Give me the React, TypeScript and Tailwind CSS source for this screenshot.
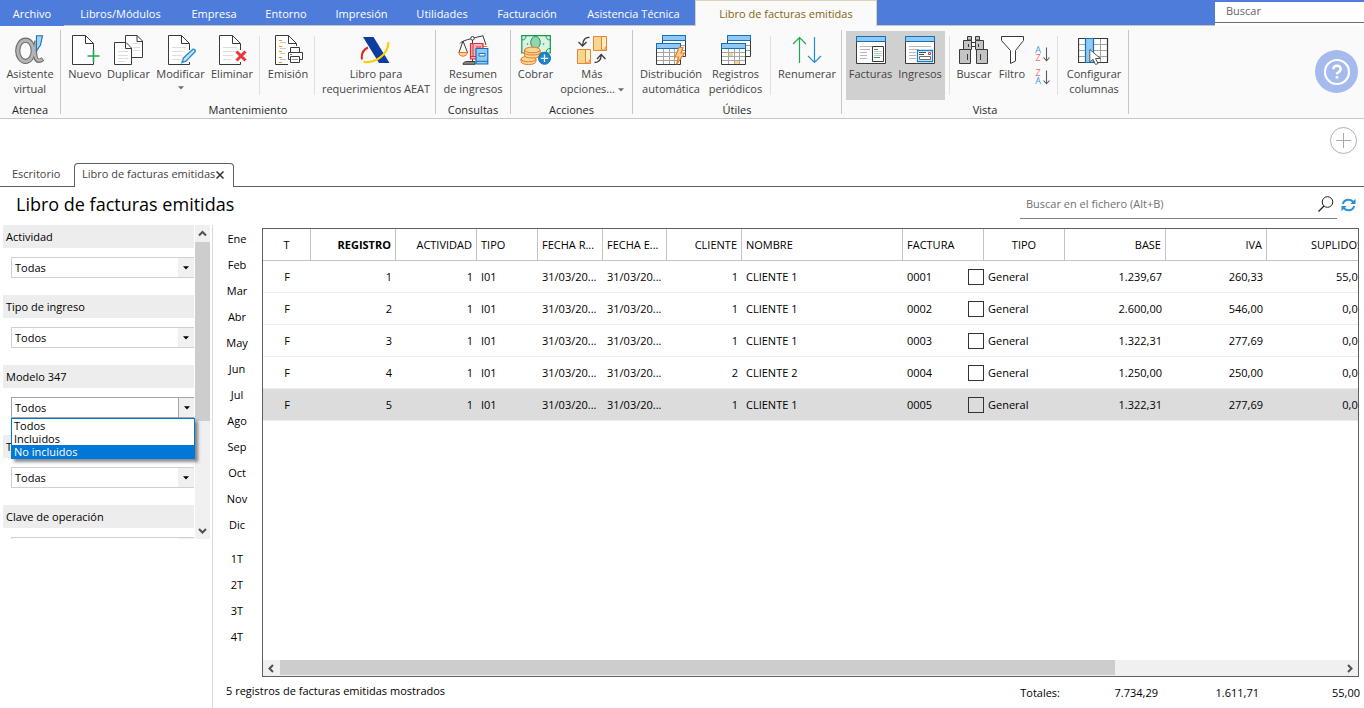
import { useState } from 'react';
import type { ReactNode } from 'react';
import { clsx } from 'clsx';

const menu = [
  { label: 'Archivo', w: 'w-[64px]' },
  { label: 'Libros/Módulos', w: 'w-[113px]' },
  { label: 'Empresa', w: 'w-[74px]' },
  { label: 'Entorno', w: 'w-[70px]' },
  { label: 'Impresión', w: 'w-[81px]' },
  { label: 'Utilidades', w: 'w-[80px]' },
  { label: 'Facturación', w: 'w-[90px]' },
  { label: 'Asistencia Técnica', w: 'w-[123px]' },
];

const filters = [
  { id: 'actividad', label: 'Actividad', value: 'Todas' },
  { id: 'tipo-ingreso', label: 'Tipo de ingreso', value: 'Todos' },
  { id: 'modelo-347', label: 'Modelo 347', value: 'Todos', options: ['Todos', 'Incluidos', 'No incluidos'] },
  { id: 'tipo-operacion', label: 'T', value: 'Todas' },
  { id: 'clave', label: 'Clave de operación', value: 'Todas' },
];

const months = ['Ene', 'Feb', 'Mar', 'Abr', 'May', 'Jun', 'Jul', 'Ago', 'Sep', 'Oct', 'Nov', 'Dic'];
const quarters = ['1T', '2T', '3T', '4T'];

const columns = [
  { label: 'T', w: 'w-[48px]', align: 'text-center' },
  { label: 'REGISTRO', w: 'w-[85px]', align: 'text-right font-bold' },
  { label: 'ACTIVIDAD', w: 'w-[81px]', align: 'text-right' },
  { label: 'TIPO', w: 'w-[61px]', align: 'text-left' },
  { label: 'FECHA R...', w: 'w-[65px]', align: 'text-left' },
  { label: 'FECHA E...', w: 'w-[64px]', align: 'text-left' },
  { label: 'CLIENTE', w: 'w-[75px]', align: 'text-right' },
  { label: 'NOMBRE', w: 'w-[161px]', align: 'text-left' },
  { label: 'FACTURA', w: 'w-[81px]', align: 'text-left' },
  { label: 'TIPO', w: 'w-[81px]', align: 'text-center' },
  { label: 'BASE', w: 'w-[101px]', align: 'text-right' },
  { label: 'IVA', w: 'w-[101px]', align: 'text-right' },
  { label: 'SUPLIDOS', w: 'w-[101px]', align: 'text-right' },
];

const invoices = [
  { reg: 1, client: 1, name: 'CLIENTE 1', number: '0001', base: '1.239,67', iva: '260,33', supl: '55,00' },
  { reg: 2, client: 1, name: 'CLIENTE 1', number: '0002', base: '2.600,00', iva: '546,00', supl: '0,00' },
  { reg: 3, client: 1, name: 'CLIENTE 1', number: '0003', base: '1.322,31', iva: '277,69', supl: '0,00' },
  { reg: 4, client: 2, name: 'CLIENTE 2', number: '0004', base: '1.250,00', iva: '250,00', supl: '0,00' },
  { reg: 5, client: 1, name: 'CLIENTE 1', number: '0005', base: '1.322,31', iva: '277,69', supl: '0,00' },
];

function Icon({ children }: { children: ReactNode }) {
  return (
    <svg width="32" height="32" viewBox="0 0 32 32" fill="none" stroke="#3a3a3a" className="shrink-0" aria-hidden="true">
      {children}
    </svg>
  );
}

// Sheet with a folded corner; the lower right side stays open for the action mark
function Sheet({ lines = false }: { lines?: boolean }) {
  return (
    <>
      <path d="M24.5 15V8.5L16.5 .5H3.5V29.5H24.5V27" fill="#fff" stroke="none" />
      <path d="M24.5 15V8.5L16.5 .5H3.5V29.5H24.5V27M16.5 .5V8.5H24.5" />
      {lines && <path d="M7 12.5H21M7 16.5H20M7 20.5H17M7 24.5H15" stroke="#dedede" />}
    </>
  );
}

const icons = {
  assistant: (
    <Icon>
      <ellipse cx="11.5" cy="15.8" rx="7.8" ry="10.6" stroke="#6c6c6c" strokeWidth="5.2" />
      <path d="M22.5 6Q20 16 21.5 22Q23 28.5 29 24" stroke="#6c6c6c" strokeWidth="4.4" />
      <ellipse cx="11.5" cy="15.8" rx="7.8" ry="10.6" stroke="#b4b4b4" strokeWidth="3" />
      <path d="M22.5 6Q20 16 21.5 22Q23 27.5 28.3 24.4" stroke="#b4b4b4" strokeWidth="2.4" />
      <path d="M22.5 .8H28.5L26.5 10L22.3 16Z" fill="#9fd3f7" stroke="#1f6fb5" strokeWidth="1.1" />
    </Icon>
  ),
  add: <Icon><Sheet /><path d="M24.5 15V27M18.5 21H30.5" stroke="#1faa50" strokeWidth="1.6" /></Icon>,
  duplicate: (
    <Icon>
      <path d="M12.5 22.5V.5H24L29.5 6V22.5Z" fill="#fff" />
      <path d="M24 .5V6.5H29.5" />
      <path d="M19 8.5H27M20 12.5H27M20 15.5H27" stroke="#dedede" />
      <path d="M1.5 7.5H13L18.5 13V29.5H1.5Z" fill="#fff" />
      <path d="M12.5 7.5V13.5H18.5" />
      <path d="M5 16.5H15M5 20.5H15M5 23.5H15M5 26.5H12" stroke="#dedede" />
    </Icon>
  ),
  edit: (
    <Icon>
      <Sheet lines />
      <path d="M17 27.5L18.5 23L28 14.2Q30.5 14 30.3 16.5L21.2 26Z" fill="#c7e4fa" stroke="#2a8dd4" strokeWidth="1.4" />
    </Icon>
  ),
  remove: <Icon><Sheet lines /><path d="M20.5 16.5L29.5 25.5M29.5 16.5L20.5 25.5" stroke="#e8383b" strokeWidth="3" /></Icon>,
  print: (
    <Icon>
      <path d="M16 29.5H3.5V.5H16.5L24.5 8.5V11" fill="#fff" />
      <path d="M16.5 .5V8.5H24.5" />
      <path d="M7 5.5H10M7 11.5H10M7 16.5H10M7 22.5H10M7 27.5H10" stroke="#f29a1f" />
      <path d="M8 7.5H14M8 13.5H14M8 18.5H13M8 24.5H14" stroke="#c8c8c8" />
      <path d="M18.5 17V12.5H27.5V17" fill="#fff" />
      <path d="M18 24.5H16.5V17.5H30.5V24.5H28" fill="#fff" />
      <path d="M18.5 21.5H27.5V27.5H18.5Z" fill="#fff" />
      <path d="M20 24.5H26" stroke="#9a9a9a" />
      <path d="M18 19.5H20" stroke="#2a8dd4" />
    </Icon>
  ),
  aeat: (
    <Icon>
      <path d="M3 2H13.5L29.5 28H19Z" fill="#0d3d9c" stroke="none" />
      <path d="M2 24.5Q.5 16 8 12.5" stroke="#e1271c" strokeWidth="2" />
      <path d="M3.5 26.8C15.5 28.5 28 20 28.5 7" stroke="#fbce07" strokeWidth="2.2" />
    </Icon>
  ),
  balance: (
    <Icon>
      <path d="M3 8.5Q4 6 15 3.5Q20 2 26 .8L29 10M6 6L2 17.5M6 6L10.5 17.5M15.5 5V26" strokeWidth="1" />
      <circle cx="15.5" cy="3.3" r="1.8" fill="#fff" />
      <path d="M1.5 17.5H10.7Q9.5 21.3 6 21.3T1.5 17.5Z" fill="#fbd795" stroke="#e9792b" />
      <path d="M26 11.5H30.5" stroke="#e9792b" />
      <path d="M6 29.3Q6 26.5 11 26.5H18V29.3Z" fill="#8a8a8a" />
      <path d="M13.5 8.5H26V24H13.5Z" fill="#f3b3bc" stroke="#dd2f35" strokeWidth="1.2" />
      <path d="M13.5 21.5H19M16 8.5V21.5M19 12H24" stroke="#dd2f35" />
      <path d="M19 13.5H30.8V29H19Z" fill="#91c9f5" stroke="#1470b8" strokeWidth="1.2" />
      <path d="M22 18.5H28V21H22Z" fill="#fff" stroke="#1470b8" />
      <path d="M19 26.3H30.8" stroke="#1470b8" />
    </Icon>
  ),
  cash: (
    <Icon>
      <path d="M1.8 .7H30.3V18H1.8Z" fill="#d9f2e3" stroke="#189a4d" strokeWidth="1.2" />
      <path d="M1.8 5Q6 5 6 .7M26 .7Q26 5 30.3 5M26 18Q26 13.5 30.3 13.5" stroke="#189a4d" />
      <ellipse cx="15.5" cy="7.5" rx="4.8" ry="6" fill="#93d6ad" stroke="#189a4d" />
      <circle cx="7.5" cy="9" r=".8" fill="#189a4d" stroke="none" />
      <circle cx="23.5" cy="9" r=".8" fill="#189a4d" stroke="none" />
      <g fill="#fbd795" stroke="#e9792b">
        <path d="M1 24V26Q1 29.5 8.5 29.5T16 26V24Z" />
        <ellipse cx="8.5" cy="24" rx="7.5" ry="2.8" />
        <path d="M4.5 15V20Q4.5 23 12.3 23T20 20V15Z" />
        <path d="M4.5 17.5Q5 20 12.3 20T20 17.5" />
        <ellipse cx="12.3" cy="15" rx="7.7" ry="2.8" />
      </g>
      <circle cx="24.5" cy="23.3" r="6" fill="#1d84cf" stroke="#1470b8" />
      <path d="M24.5 19.5V27M20.7 23.3H28.3" stroke="#fff" strokeWidth="1.3" />
    </Icon>
  ),
  more: (
    <Icon>
      <g fill="#f6d78f" stroke="#e9852f" strokeWidth="1">
        <path d="M17.5 1.5H30.5V15.5H17.5Z" />
        <path d="M25.5 1.5H30.5V11.5L29 12.5V15.5L25.5 14.5Z" fill="#fdebc5" />
        <path d="M1.5 14.5H14.5V28.5H1.5Z" />
        <path d="M9.5 14.5H14.5V24.5L13 25.5V28.5L9.5 27.5Z" fill="#fdebc5" />
      </g>
      <path d="M13.5 2.5Q7 2 6.5 10.5M2.5 7L6.5 11L10.5 7" strokeWidth="1.3" />
      <path d="M18.5 27.5Q25 27.5 25.2 20M21 24L25.2 19.5L29.5 24" strokeWidth="1.3" />
    </Icon>
  ),
  calendarBolt: (
    <Icon>
      <Calendars />
      <path d="M24 12.5H28L26 18H29.5L21.5 29.5L23.5 22H20Z" fill="#fbd28a" stroke="#e9792b" strokeWidth="1.2" />
    </Icon>
  ),
  calendarPeriod: (
    <Icon>
      <Calendars />
      <path d="M9 18H13V21H9ZM15 26H19V29H15Z" fill="#f7d78f" stroke="none" />
    </Icon>
  ),
  renumber: (
    <Icon>
      <path d="M8.5 28V2.5M2 9L8.5 2.5L15 9" stroke="#1faa50" strokeWidth="1.2" />
      <path d="M23.5 2V27.5M17 21L23.5 27.5L30 21" stroke="#2a8dd4" strokeWidth="1.2" />
    </Icon>
  ),
  invoices: (
    <Icon>
      <Window />
      <path d="M17.5 11.5H28.5V26.5H17.5Z" fill="#fff" />
      <path d="M19 14.5H23M19 22.5H25" stroke="#1faa50" />
      <path d="M19 16.5H27M19 18.5H27M19 20.5H27" stroke="#c8c8c8" />
    </Icon>
  ),
  income: (
    <Icon>
      <Window />
      <path d="M13.5 15.5H28.5V26.5H13.5Z" fill="#fff" stroke="#1e80c9" strokeWidth="1.3" />
      <path d="M15 17.5H22M15 19.5H20" strokeWidth=".9" />
      <path d="M24.5 17.5H26.5V19.5H24.5Z" stroke="#e5383b" />
      <path d="M15.5 21.5H26.5V24.5H15.5Z" stroke="#6d6d6d" />
    </Icon>
  ),
  binoculars: (
    <Icon>
      <g fill="#c4c4c4">
        <path d="M9.5 1.5H13.5V5H9.5ZM17.5 1.5H21.5V5H17.5Z" />
        <path d="M13.5 7.5H17.5V11.5H13.5Z" fill="#fff" />
        <path d="M5.5 5.5H13.5V14.5H5.5ZM17.5 5.5H25.5V14.5H17.5Z" />
        <path d="M1.5 14.5H12.5V28.5H1.5ZM18.5 14.5H29.5V28.5H18.5Z" />
      </g>
      <path d="M9.5 19V25M22.5 19V25M10.5 9V12M20.5 9V12" />
    </Icon>
  ),
  funnel: (
    <Icon>
      <path d="M5.5 1.5H27.5V5.5L19.5 15.5V26L14.5 28.5V15.5L5.5 5.5Z" fill="#fff" />
    </Icon>
  ),
  columns: (
    <Icon>
      <path d="M.5 3.5H29.5V27.5H.5Z" fill="#fff" strokeWidth="1.2" />
      <path d="M1 9.5H29M1 15.5H29M1 21.5H29M22.5 4V27" stroke="#a5a5a5" />
      <path d="M7.5 3.5H15.5V27.5H7.5Z" fill="#91c9f5" stroke="#1470b8" strokeWidth="1.2" />
      <path d="M11.8 14.5V27L15 24.3L17.5 29.5L20 28.5L17.5 23.5L22.5 23.5Z" fill="#fff" stroke="#5a5a5a" />
    </Icon>
  ),
};

function Calendars() {
  return (
    <>
      <path d="M7.5 .5H30.5V21.5H7.5Z" fill="#fff" />
      <path d="M26 10.5H30M26 15.5H30" stroke="#9b9b9b" />
      <path d="M7.5 .5H30.5V5.5H7.5Z" fill="#91c9f5" stroke="#1470b8" />
      <path d="M1.5 8.5H25.5V29.5H1.5Z" fill="#fff" />
      <path d="M2 17.5H25M2 21.5H25M2 25.5H25M8.5 14V29M14.5 14V29M19.5 14V29" stroke="#a5a5a5" />
      <path d="M1.5 8.5H25.5V13.5H1.5Z" fill="#91c9f5" stroke="#1470b8" />
    </>
  );
}

function Window() {
  return (
    <>
      <path d="M1.5 1.5H30.5V28.5H1.5Z" fill="#fff" />
      <path d="M1.5 1.5H30.5V6.5H1.5Z" fill="#91c9f5" stroke="#1470b8" />
      <path d="M5 11.5H27M5 14.5H15M5 17.5H12M5 20.5H12M5 23.5H12" stroke="#b8b8b8" />
    </>
  );
}

function Caret({ className = 'text-[#6a6a6a]' }: { className?: string }) {
  return (
    <svg width="6" height="4" viewBox="0 0 6 4" className={clsx('inline-block', className)} aria-hidden="true">
      <path d="M0 .3H6L3 3.6Z" fill="currentColor" />
    </svg>
  );
}

function Chevron({ d }: { d: string }) {
  return (
    <svg width="9" height="9" viewBox="0 0 9 9" fill="none" stroke="#505050" strokeWidth="2" aria-hidden="true">
      <path d={d} />
    </svg>
  );
}

function Tool({ icon, w, active, children }: { icon: ReactNode; w: string; active?: boolean; children: ReactNode }) {
  return (
    <button
      type="button"
      className={clsx('flex h-[69px] shrink-0 flex-col items-center whitespace-nowrap pt-1 text-center leading-[15px]', w, active ? 'bg-[#d0d0d0]' : 'hover:bg-[#ececec]')}
    >
      {icon}
      <span className="-mt-px">{children}</span>
    </button>
  );
}

function Group({ label, children, flush }: { label: string; children: ReactNode; flush?: boolean }) {
  return (
    <>
      <section className={clsx('shrink-0 pt-[5px]', !flush && 'px-1')}>
        <div className="flex">{children}</div>
        <h2 className="text-center leading-5 text-[#262626]">{label}</h2>
      </section>
      <div className="my-1 w-px shrink-0 bg-[#c6c6c6]" />
    </>
  );
}

function Divider() {
  return <div className="ml-1 mr-1.5 mt-[5px] h-[59px] w-px shrink-0 bg-[#e0e0e0]" />;
}

function SortButton({ first, second, label }: { first: 'A' | 'Z'; second: 'A' | 'Z'; label: string }) {
  const tone = (c: string) => (c === 'A' ? 'text-[#3a9be0]' : 'text-[#ee6a6a]');
  return (
    <button type="button" aria-label={label} className="flex h-4 w-full items-center justify-center gap-px">
      <span className="flex flex-col text-[9px] leading-[8px]">
        <span className={tone(first)}>{first}</span>
        <span className={tone(second)}>{second}</span>
      </span>
      <svg width="8" height="15" viewBox="0 0 8 15" fill="none" stroke="#5a5a5a" aria-hidden="true">
        <path d="M4.5 .5V13.5M1.5 10.5L4.5 13.8L7.5 10.5" strokeWidth="1.1" />
      </svg>
    </button>
  );
}

function Ribbon() {
  return (
    <div className="flex h-[93px] border-b border-[#c6c6c6] bg-[#fafafa] text-[#444]">
      <Group label="Atenea" flush>
        <Tool icon={icons.assistant} w="w-[60px]">Asistente<br />virtual</Tool>
      </Group>
      <Group label="Mantenimiento">
        <Tool icon={icons.add} w="w-[40px]">Nuevo</Tool>
        <Tool icon={icons.duplicate} w="w-[47px]">Duplicar</Tool>
        <Tool icon={icons.edit} w="w-[57px]">Modificar<br /><Caret className="mb-1 text-[#6a6a6a]" /></Tool>
        <Tool icon={icons.remove} w="w-[46px]">Eliminar</Tool>
        <Divider />
        <Tool icon={icons.print} w="w-[44px]">Emisión</Tool>
        <Divider />
        <Tool icon={icons.aeat} w="w-[110px]">Libro para<br />requerimientos AEAT</Tool>
      </Group>
      <Group label="Consultas">
        <Tool icon={icons.balance} w="w-[66px]">Resumen<br />de ingresos</Tool>
      </Group>
      <Group label="Acciones">
        <Tool icon={icons.cash} w="w-[41px]">Cobrar</Tool>
        <Tool icon={icons.more} w="w-[72px]">Más<br />opciones... <Caret /></Tool>
      </Group>
      <Group label="Útiles">
        <Tool icon={icons.calendarBolt} w="w-[68px]">Distribución<br />automática</Tool>
        <Tool icon={icons.calendarPeriod} w="w-[61px]">Registros<br />periódicos</Tool>
        <Divider />
        <Tool icon={icons.renumber} w="w-[60px]">Renumerar</Tool>
      </Group>
      <Group label="Vista">
        <Tool icon={icons.invoices} w="w-[49px]" active>Facturas</Tool>
        <Tool icon={icons.income} w="w-[50px]" active>Ingresos</Tool>
        <Divider />
        <Tool icon={icons.binoculars} w="w-[36px]">Buscar</Tool>
        <Tool icon={icons.funnel} w="w-[40px]">Filtro</Tool>
        <div className="flex w-[21px] flex-col gap-[7px] pt-[15px]">
          <SortButton first="A" second="Z" label="Orden ascendente" />
          <SortButton first="Z" second="A" label="Orden descendente" />
        </div>
        <Divider />
        <Tool icon={icons.columns} w="w-[60px]">Configurar<br />columnas</Tool>
      </Group>
      <button type="button" aria-label="Ayuda" className="ml-auto mr-1.5 mt-6 flex size-[43px] shrink-0 items-center justify-center rounded-full bg-[#a5baed]">
        <svg width="28" height="28" viewBox="0 0 28 28" fill="none" stroke="#fff" aria-hidden="true">
          <circle cx="14" cy="14" r="12" strokeWidth="2.2" />
          <path d="M10.3 11.2Q10.5 7.8 14 7.8T17.7 11.2Q17.7 13 14 15.2V16.2" strokeWidth="2.4" />
          <path d="M14 18V20.6" strokeWidth="2.6" />
        </svg>
      </button>
    </div>
  );
}

function Filters() {
  return (
    <div className="relative ml-[3px] flex h-[314px] w-[208px] overflow-hidden">
      <div className="flex w-[191px] flex-col">
        {filters.map((f) => (
          <div key={f.id} className="h-[70px] shrink-0">
            <label htmlFor={f.id} className="block bg-[#ededed] pl-[3px] leading-[23px]">{f.label}</label>
            <div className="relative ml-2 mt-[9px]">
              <select
                id={f.id}
                defaultValue={f.value}
                className={clsx('block h-[21px] w-full appearance-none border border-r-0 bg-white pl-[3px] pt-px outline-none', f.options ? 'border-[#a5a5a5]' : 'border-[#d0d0d0]')}
              >
                {(f.options ?? [f.value]).map((o) => <option key={o}>{o}</option>)}
              </select>
              <span className={clsx('pointer-events-none absolute inset-y-px right-0 flex w-4 items-center justify-center bg-[#f0f0f0]', f.options && 'border-l border-[#a5a5a5]')}>
                <Caret className="text-black" />
              </span>
              {f.options && (
                <ul role="listbox" aria-label={f.label} className="absolute left-0 top-[21px] z-10 w-[184px] border border-[#0078d7] bg-white leading-[13px] shadow-[3px_3px_3px_rgba(0,0,0,0.45)]">
                  {f.options.map((o) => (
                    <li key={o} role="option" aria-selected={o === 'No incluidos'} className={clsx('pl-[2px]', o === 'No incluidos' && 'bg-[#0078d7] text-white')}>{o}</li>
                  ))}
                </ul>
              )}
            </div>
          </div>
        ))}
      </div>
      <div className="ml-px flex w-[15px] flex-col items-center bg-[#f0f0f0]">
        <div className="flex h-[17px] items-center"><Chevron d="M1 6.5L4.5 3L8 6.5" /></div>
        <div className="h-[179px] w-full bg-[#cdcdcd]" />
        <div className="mt-auto flex h-[17px] items-center"><Chevron d="M1 3L4.5 6.5L8 3" /></div>
      </div>
    </div>
  );
}

function InvoiceTable() {
  const [selected, setSelected] = useState(5);
  return (
    <div className="flex min-w-0 flex-1 flex-col border border-[#606060]">
      <div className="flex-1 overflow-hidden">
        <table className="w-[1105px] table-fixed border-separate border-spacing-0">
          <thead>
            <tr className="h-8">
              {columns.map((c, i) => (
                <th key={i} scope="col" className={clsx('border-b border-r border-[#c3c3c3] px-1 pb-0 pt-px', c.w, c.align, i !== 1 && 'font-normal')}>{c.label}</th>
              ))}
            </tr>
          </thead>
          <tbody>
            {invoices.map((r) => (
              <tr
                key={r.reg}
                onClick={() => setSelected(r.reg)}
                className={clsx('h-8 [&>td]:border-b [&>td]:border-[#ededed] [&>td]:px-1 [&>td]:pb-0 [&>td]:pt-px', r.reg === selected && 'bg-[#dcdcdc]')}
              >
                <td className="text-center">F</td>
                <td className="text-right">{r.reg}</td>
                <td className="text-right">1</td>
                <td>I01</td>
                <td>31/03/20...</td>
                <td>31/03/20...</td>
                <td className="text-right">{r.client}</td>
                <td>{r.name}</td>
                <td>
                  <div className="-mr-1 flex items-start justify-between">
                    {r.number}
                    <input type="checkbox" id={`tipo-${r.reg}`} className="size-4 appearance-none border border-[#333] checked:bg-[#333]" />
                  </div>
                </td>
                <td><label htmlFor={`tipo-${r.reg}`}>General</label></td>
                <td className="text-right">{r.base}</td>
                <td className="text-right">{r.iva}</td>
                <td className="text-right">{r.supl}</td>
              </tr>
            ))}
          </tbody>
        </table>
      </div>
      <div className="flex h-4 items-center bg-[#f0f0f0]">
        <div className="flex w-[17px] justify-center"><Chevron d="M6 1L2.5 4.5L6 8" /></div>
        <div className="flex-1"><div className="h-4 w-[835px] border-b border-[#f0f0f0] bg-[#cdcdcd]" /></div>
        <div className="flex w-[17px] justify-center"><Chevron d="M3 1L6.5 4.5L3 8" /></div>
      </div>
    </div>
  );
}

export default function App() {
  const [period, setPeriod] = useState<string | null>(null);
  return (
    <div className="flex min-h-screen flex-col overflow-hidden bg-white font-['Open_Sans','Noto_Sans',sans-serif] text-[11px] text-black">
      <nav className="flex h-[26px] bg-[#4d7cdb] text-white">
        {menu.map((m, i) => (
          <a key={m.label} href="#" className={clsx('shrink-0 whitespace-nowrap text-center leading-[27px]', m.w, i > 0 && 'border-b border-[#c6c6c6]')}>{m.label}</a>
        ))}
        <a href="#" aria-current="page" className="w-[182px] shrink-0 whitespace-nowrap border-x border-t border-[#d9d3b8] bg-[#fafafa] text-center leading-[25px] text-[#86640f]">Libro de facturas emitidas</a>
        <div className="flex-1 border-b border-[#c6c6c6]" />
        <div className="mt-0.5 w-[149px] shrink-0 bg-white">
          <input aria-label="Buscar" placeholder="Buscar" className="block h-[21px] w-full border-b border-[#707070] bg-white pb-1 pl-[11px] text-black outline-none placeholder:text-[#666]" />
        </div>
      </nav>
      <Ribbon />

      <div className="flex h-[44px] items-start justify-end pr-[7px] pt-2">
        <button type="button" aria-label="Añadir" className="flex size-[27px] items-center justify-center rounded-full border border-[#b0b0b0]">
          <svg width="15" height="15" viewBox="0 0 15 15" stroke="#a8a8a8" aria-hidden="true"><path d="M7.5 0V15M0 7.5H15" /></svg>
        </button>
      </div>
      <div className="flex h-6 leading-[22px] text-[#444]">
        <a href="#" className="w-[74px] border-b border-[#606060] pl-3">Escritorio</a>
        <div className="flex w-[160px] items-start rounded-t-[4px] border-x border-t border-[#606060] pl-[7px]">
          <a href="#" className="whitespace-nowrap leading-5">Libro de facturas emitidas</a>
          <button type="button" aria-label="Cerrar pestaña" className="ml-px mt-[7px]">
            <svg width="8" height="8" viewBox="0 0 8 8" stroke="#333" strokeWidth="1.5" aria-hidden="true"><path d="M.5 .5L7.5 7.5M7.5 .5L.5 7.5" /></svg>
          </button>
        </div>
        <div className="flex-1 border-b border-[#606060]" />
      </div>

      <div className="flex h-[38px] items-start justify-between pl-4 pr-2">
        <h1 className="text-[18px] leading-[34px]">Libro de facturas emitidas</h1>
        <div className="flex items-start gap-1">
          <div className="flex h-8 w-[317px] items-center border-b border-[#808080] pr-[3px] pt-0.5">
            <input type="search" aria-label="Buscar en el fichero" placeholder="Buscar en el fichero (Alt+B)" className="h-full min-w-0 flex-1 pl-1.5 outline-none placeholder:text-[#707070]" />
            <svg width="16" height="16" viewBox="0 0 16 16" fill="none" stroke="#222" aria-hidden="true">
              <circle cx="9.5" cy="6" r="5.3" />
              <path d="M6 10L.5 15.5" strokeWidth="1.3" />
            </svg>
          </div>
          <button type="button" aria-label="Actualizar" className="mt-[11px]">
            <svg width="15" height="14" viewBox="0 0 15 14" fill="none" stroke="#2b8fd6" strokeWidth="2" aria-hidden="true">
              <path d="M1.8 6Q3 1.7 7.5 1.7Q10.5 1.7 12.5 4.5M13.2 8Q12 12.3 7.5 12.3Q4.5 12.3 2.5 9.5" />
              <path d="M14.5 .8V6H9.3ZM.5 13.2V8H5.7Z" fill="#2b8fd6" stroke="none" />
            </svg>
          </button>
        </div>
      </div>

      <main className="flex flex-1">
        <aside className="w-[213px] shrink-0 border-r border-[#d9d9d9]">
          <Filters />
        </aside>
        <div className="flex min-w-0 flex-1 flex-col">
          <div className="flex flex-1 pr-[5px] pt-[3px]">
            <div className="-mt-0.5 flex w-[49px] shrink-0 flex-col pr-px">
              {[...months, ...quarters].map((p) => (
                <button
                  key={p}
                  type="button"
                  onClick={() => setPeriod(p)}
                  className={clsx('h-[26px]', p === '1T' && 'mt-2', p === period && 'font-bold')}
                >
                  {p}
                </button>
              ))}
            </div>
            <InvoiceTable />
          </div>
          <footer className="flex h-[31px] justify-between pl-[13px] pr-1 leading-7">
            <p>5 registros de facturas emitidas mostrados</p>
            <dl className="flex pt-0.5 text-right">
              <dt>Totales:</dt>
              <dd className="w-[98px]">7.734,29</dd>
              <dd className="w-[101px]">1.611,71</dd>
              <dd className="w-[101px]">55,00</dd>
            </dl>
          </footer>
        </div>
      </main>
    </div>
  );
}
